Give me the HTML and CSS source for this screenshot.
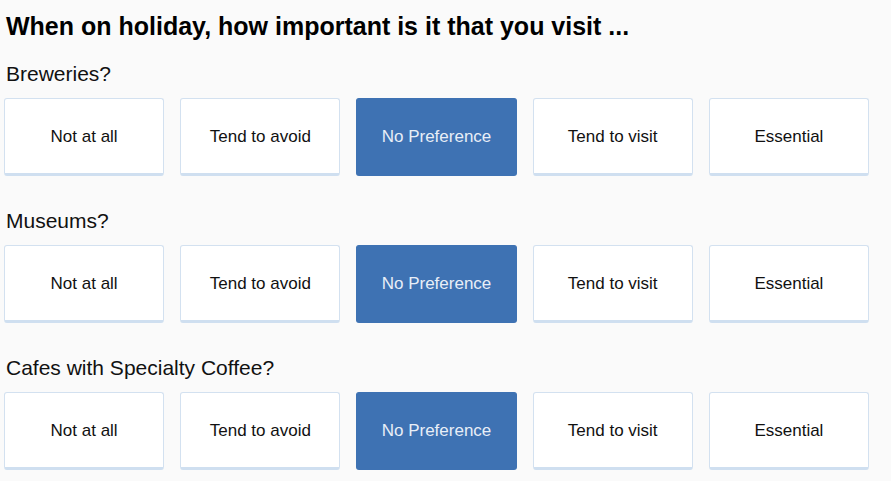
FILE: index.html
```html
<!DOCTYPE html>
<html>
<head>
<meta charset="utf-8">
<link rel="stylesheet" href="styles.css">
</head>
<body>
<div class="page">
  <h1 class="title">When on holiday, how important is it that you visit ...</h1>
  <section class="question">
    <h2 class="label">Breweries?</h2>
    <div class="options">
      <button class="opt">Not at all</button>
      <button class="opt">Tend to avoid</button>
      <button class="opt selected">No Preference</button>
      <button class="opt">Tend to visit</button>
      <button class="opt">Essential</button>
    </div>
  </section>
  <section class="question">
    <h2 class="label">Museums?</h2>
    <div class="options">
      <button class="opt">Not at all</button>
      <button class="opt">Tend to avoid</button>
      <button class="opt selected">No Preference</button>
      <button class="opt">Tend to visit</button>
      <button class="opt">Essential</button>
    </div>
  </section>
  <section class="question">
    <h2 class="label">Cafes with Specialty Coffee?</h2>
    <div class="options">
      <button class="opt">Not at all</button>
      <button class="opt">Tend to avoid</button>
      <button class="opt selected">No Preference</button>
      <button class="opt">Tend to visit</button>
      <button class="opt">Essential</button>
    </div>
  </section>
</div>
</body>
</html>
```
FILE: styles.css
```css
html, body {
  margin: 0;
  padding: 0;
  background: #fafafa;
  font-family: "Liberation Sans", Arial, sans-serif;
  color: #111;
}
.page {
  padding: 12px 4px 0 4px;
}
.title {
  margin: 0 0 22px 0;
  padding-left: 2px;
  font-size: 25px;
  line-height: 28px;
  font-weight: bold;
  color: #000;
}
.question {
  margin-bottom: 33px;
}
.label {
  margin: 0 0 12px 0;
  padding-left: 2px;
  font-size: 21px;
  line-height: 24px;
  font-weight: normal;
  color: #111;
}
.options {
  display: flex;
  gap: 16px;
  width: 865px;
}
.opt {
  flex: 1 1 0;
  box-sizing: border-box;
  height: 78px;
  background: #fff;
  border: 1px solid #d3e1f0;
  border-bottom: 3px solid #cfdff0;
  border-radius: 3px;
  font-family: "Liberation Sans", Arial, sans-serif;
  font-size: 17px;
  color: #111;
  padding: 2px 0 0 0;
}
.opt.selected {
  background: #3e72b3;
  border-color: #3e72b3;
  color: #e8eef7;
}
```
